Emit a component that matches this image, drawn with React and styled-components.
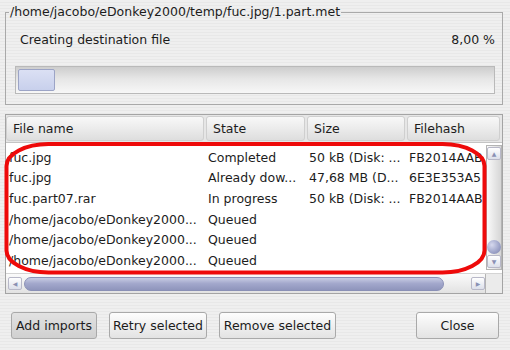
import styled, { createGlobalStyle } from 'styled-components';

const GlobalStyle = createGlobalStyle`
    html, body {
        margin: 0;
        padding: 0;
    }
    body {
        font-family: 'DejaVu Sans', 'Liberation Sans', sans-serif;
        font-size: 12.5px;
        color: #1c1c1c;
        background: repeating-linear-gradient(
            to bottom,
            #efefef 0px,
            #efefef 2px,
            #e8e8e8 2px,
            #e8e8e8 3px
        );
    }
`;

const Window = styled.div`
    position: relative;
    width: 510px;
    height: 350px;
    box-sizing: border-box;
    padding-top: 4px;
    overflow: hidden;
`;

const GroupBox = styled.fieldset`
    margin: 0 7px 0 5px;
    padding: 0 7px 10px 9px;
    border: 1px solid #a9a9a9;
    min-width: 0;
`;

const GroupTitle = styled.legend`
    padding: 0 1px;
    margin-left: -6px;
    line-height: 16px;
    font-size: 12.5px;
`;

const StatusRow = styled.div`
    display: flex;
    justify-content: space-between;
    align-items: center;
    margin-top: 12px;
    padding-left: 5px;
    line-height: 16px;
`;

const ProgressTrack = styled.div`
    margin-top: 18px;
    height: 28px;
    box-sizing: border-box;
    border: 1px solid #b9b9b9;
    background: linear-gradient(to bottom, #cdcdcd 0%, #e6e6e6 45%, #f7f7f7 100%);
    padding: 2px;
`;

const ProgressChunk = styled.div`
    height: 100%;
    box-sizing: border-box;
    border: 1px solid #9ca4c6;
    border-radius: 2px;
    background: linear-gradient(to bottom, #dbe0f4, #c8d0ec);
`;

const ListFrame = styled.div`
    margin: 9px 7px 0 5px;
    border: 1px solid #a4a4a4;
    background: #ffffff;
    display: flex;
    flex-direction: column;
`;

const Header = styled.div`
    display: flex;
    height: 27px;
    background: #e6e6e6;
    border-bottom: 1px solid #c4c4c4;
`;

const HeaderCell = styled.div`
    width: ${(p) => p.w}px;
    flex: ${(p) => (p.w ? 'none' : '1')};
    box-sizing: border-box;
    display: flex;
    align-items: center;
    padding-left: 6px;
    margin: 1px 2px 1px 0;
    border: 1px solid #cfcfcf;
    border-radius: 3px;
    background: linear-gradient(to bottom, #f8f8f8 0%, #eaeaea 55%, #dedede 100%);
    white-space: nowrap;
    overflow: hidden;
`;

const Body = styled.div`
    display: flex;
    height: 130px;
`;

const Rows = styled.div`
    flex: 1;
    padding-top: 4px;
    overflow: hidden;
`;

const Row = styled.div`
    display: flex;
    height: 20.6px;
    align-items: center;
`;

const Cell = styled.div`
    width: ${(p) => p.w}px;
    flex: none;
    box-sizing: border-box;
    padding-left: 3px;
    white-space: nowrap;
    overflow: hidden;
`;

const VScroll = styled.div`
    width: 16px;
    box-sizing: border-box;
    margin: 2px 0 3px;
    border: 1px solid #b4b4b4;
    background: linear-gradient(to right, #fafafa, #e4e4e4 60%, #d6d6d6);
    display: flex;
    flex-direction: column;
    align-items: center;
`;

const ArrowBox = styled.div`
    width: 12px;
    height: 11px;
    margin: 1px 0;
    border: 1px solid #b8b8c8;
    border-radius: 2px;
    background: linear-gradient(to bottom, #ffffff, #dcdfea);
    display: flex;
    align-items: center;
    justify-content: center;
    color: #8a90b4;
    font-size: 6px;
    line-height: 1;
`;

const Spacer = styled.div`
    flex: 1;
`;

const Ball = styled.div`
    width: 14px;
    height: 14px;
    border-radius: 50%;
    background: radial-gradient(circle at 35% 35%, #d6d9ee, #9ca2c8 60%, #7c82aa);
`;

const HScrollRow = styled.div`
    display: flex;
    height: 19px;
    background: #f2f2f2;
    border-top: 1px solid #d4d4d4;
`;

const HScroll = styled.div`
    flex: 1;
    display: flex;
    align-items: center;
    gap: 2px;
    padding: 0 0 0 2px;
    background: linear-gradient(to bottom, #fbfbfb, #e2e2e2);
    border-right: 1px solid #b4b4b4;
`;

const HThumb = styled.div`
    width: 420px;
    height: 14px;
    border-radius: 7px;
    background: linear-gradient(to bottom, #c8cce4 0%, #a3a8cc 45%, #8f95bc 100%);
    border: 1px solid #8a90b6;
    box-sizing: border-box;
`;

const Corner = styled.div`
    width: 16px;
    background: #ebebeb;
`;

const ButtonBar = styled.div`
    display: flex;
    align-items: center;
    gap: 12px;
    padding: 18px 11px 0 11px;
`;

const Button = styled.button`
    height: 27px;
    width: ${(p) => p.w}px;
    box-sizing: border-box;
    padding: 0;
    font-family: 'DejaVu Sans', 'Liberation Sans', sans-serif;
    font-size: 12.5px;
    color: #1c1c1c;
    border: 1px solid #a9a9a9;
    border-radius: 3px;
    white-space: nowrap;
    overflow: hidden;
    background: ${(p) =>
        p.pressed
            ? 'linear-gradient(to bottom, #e2e2e2, #d0d0d0)'
            : 'linear-gradient(to bottom, #fdfdfd, #e3e3e3)'};
    margin-left: ${(p) => (p.push ? 'auto' : '0')};
`;

const Annotation = styled.svg`
    position: absolute;
    left: 3px;
    top: 141px;
    pointer-events: none;
`;

const rows = [
    ['fuc.jpg', 'Completed', '50 kB (Disk: ...', 'FB2014AAB'],
    ['fuc.jpg', 'Already dow...', '47,68 MB (D...', '6E3E353A5'],
    ['fuc.part07.rar', 'In progress', '50 kB (Disk: ...', 'FB2014AAB'],
    ['/home/jacobo/eDonkey2000...', 'Queued', '', ''],
    ['/home/jacobo/eDonkey2000...', 'Queued', '', ''],
    ['/home/jacobo/eDonkey2000...', 'Queued', '', ''],
];

export default function App() {
    return (
        <>
            <GlobalStyle />
            <Window>
                <GroupBox>
                    <GroupTitle>/home/jacobo/eDonkey2000/temp/fuc.jpg/1.part.met</GroupTitle>
                    <StatusRow>
                        <span>Creating destination file</span>
                        <span>8,00 %</span>
                    </StatusRow>
                    <ProgressTrack>
                        <ProgressChunk style={{ width: '37px' }} />
                    </ProgressTrack>
                </GroupBox>

                <ListFrame>
                    <Header>
                        <HeaderCell w={198}>File name</HeaderCell>
                        <HeaderCell w={99}>State</HeaderCell>
                        <HeaderCell w={98}>Size</HeaderCell>
                        <HeaderCell>Filehash</HeaderCell>
                    </Header>
                    <Body>
                        <Rows>
                            {rows.map((r, i) => (
                                <Row key={i}>
                                    <Cell w={199}>{r[0]}</Cell>
                                    <Cell w={101}>{r[1]}</Cell>
                                    <Cell w={100}>{r[2]}</Cell>
                                    <Cell w={79}>{r[3]}</Cell>
                                </Row>
                            ))}
                        </Rows>
                        <VScroll>
                            <ArrowBox>▲</ArrowBox>
                            <Spacer />
                            <Ball />
                            <ArrowBox>▼</ArrowBox>
                        </VScroll>
                    </Body>
                    <HScrollRow>
                        <HScroll>
                            <ArrowBox>◀</ArrowBox>
                            <HThumb />
                            <Spacer />
                            <ArrowBox>▶</ArrowBox>
                        </HScroll>
                        <Corner />
                    </HScrollRow>
                </ListFrame>

                <ButtonBar>
                    <Button w={86} pressed>Add imports</Button>
                    <Button w={98}>Retry selected</Button>
                    <Button w={117}>Remove selected</Button>
                    <Button w={83} push>Close</Button>
                </ButtonBar>

                <Annotation width="486" height="136">
                    <rect
                        x="3.5"
                        y="3"
                        width="478"
                        height="128.5"
                        rx="42"
                        ry="22"
                        fill="none"
                        stroke="#ee0a0a"
                        strokeWidth="4"
                    />
                </Annotation>
            </Window>
        </>
    );
}
